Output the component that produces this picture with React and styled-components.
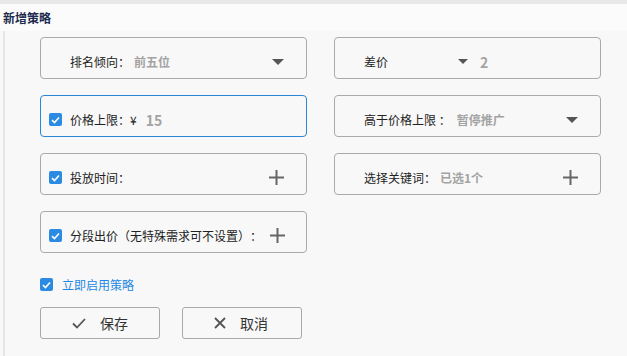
import React from "react";
import styled, { createGlobalStyle } from "styled-components";

const Global = createGlobalStyle`
  html, body { margin: 0; padding: 0; background: #f8f8f8; }
  body {
    font-family: "Noto Sans CJK SC", "Noto Sans", sans-serif;
    font-size: 12px;
    color: #333;
    text-spacing-trim: space-all;
  }
`;

const Page = styled.div`
  width: 627px;
  height: 356px;
  overflow: hidden;
  background: #f8f8f8;
`;

const TopStrip = styled.div`
  height: 4px;
  background: #e8e8e8;
`;

const Header = styled.div`
  height: 27px;
  display: flex;
  align-items: center;
  padding-left: 3px;
  background: #fbfbfb;
  font-size: 12px;
  font-weight: 700;
  color: #1d2b4f;
`;

const Body = styled.div`
  margin-left: 3px;
  border-left: 2px solid #e3e6ea;
  padding: 6px 0 0 35px;
  height: 330px;
  box-sizing: border-box;
`;

const Grid = styled.div`
  display: grid;
  grid-template-columns: 267px 267px;
  column-gap: 27px;
  row-gap: 16px;
  width: 561px;
`;

const Field = styled.div`
  height: 42px;
  box-sizing: border-box;
  border: 1px solid ${(p) => (p.$active ? "#2a86d6" : "#aaaaaa")};
  border-radius: 4px;
  display: flex;
  align-items: center;
  padding: 7px 22px 0 8px;
  gap: 8px;
  white-space: nowrap;
`;

const CheckSlot = styled.span`
  width: 13px;
  height: 13px;
  flex: none;
  border-radius: 2px;
  background: ${(p) => (p.$on ? "#2b8be2" : "transparent")};
  display: inline-flex;
  align-items: center;
  justify-content: center;
`;

const Label = styled.span`
  color: #222;
  font-size: 12px;
  ${(p) => (p.$w ? `width: ${p.$w}px;` : "")}
`;

const Value = styled.span`
  color: #a3a3a3;
  font-size: ${(p) => (p.$big ? "14px" : "12px")};
  font-weight: 700;
  margin-left: ${(p) => p.$ml ?? 0}px;
`;

const Trail = styled.span`
  margin-left: auto;
  display: inline-flex;
  align-items: center;
`;

const Triangle = styled.span`
  width: 0;
  height: 0;
  border-left: ${(p) => p.$s}px solid transparent;
  border-right: ${(p) => p.$s}px solid transparent;
  border-top: ${(p) => p.$h}px solid #555;
  display: inline-block;
`;

const Inline = styled.span`
  display: inline-flex;
  align-items: center;
  gap: 12px;
`;

const EnableRow = styled.div`
  display: flex;
  align-items: center;
  gap: 9px;
  margin-top: 25px;
  height: 13px;
  color: #1e88e5;
  font-size: 12px;
`;

const Buttons = styled.div`
  display: flex;
  gap: 22px;
  margin-top: 16px;
`;

const Button = styled.button`
  width: 120px;
  height: 32px;
  box-sizing: border-box;
  border: 1px solid #a9a9a9;
  border-radius: 3px;
  background: #f8f8f8;
  font-family: "Noto Sans CJK SC", sans-serif;
  font-size: 14px;
  color: #333;
  display: flex;
  align-items: center;
  gap: 14px;
  padding: 0 0 0 ${(p) => p.$pl}px;
  justify-content: flex-start;
`;

const Check = () => (
  <svg width="9" height="8" viewBox="0 0 9 8">
    <path d="M1 4.2 L3.5 6.5 L8 1.5" stroke="#fff" strokeWidth="1.6" fill="none" />
  </svg>
);

const Plus = () => (
  <svg width="15" height="15" viewBox="0 0 15 15">
    <path d="M7.5 0 V15 M0 7.5 H15" stroke="#666" strokeWidth="2" />
  </svg>
);

const Box = ({ check, active, children, trail }) => (
  <Field $active={active}>
    <CheckSlot $on={check}>{check && <Check />}</CheckSlot>
    {children}
    {trail && <Trail>{trail}</Trail>}
  </Field>
);

export default function App() {
  return (
    <Page lang="zh-CN">
      <Global />
      <TopStrip />
      <Header>新增策略</Header>
      <Body>
        <Grid>
          <Box trail={<Triangle $s={6} $h={6} />}>
            <Label>
              排名倾向：<Value $ml={4}>前五位</Value>
            </Label>
          </Box>
          <Box>
            <Label $w={86}>差价</Label>
            <Inline>
              <Triangle $s={5} $h={5} />
              <Value $big>2</Value>
            </Inline>
          </Box>
          <Box check active>
            <Label>价格上限：¥</Label>
            <Value $big $ml={1}>15</Value>
          </Box>
          <Box trail={<Triangle $s={6} $h={6} />}>
            <Label>
              高于价格上限 ：<Value $ml={6}>暂停推广</Value>
            </Label>
          </Box>
          <Box check trail={<Plus />}>
            <Label>投放时间：</Label>
          </Box>
          <Box trail={<Plus />}>
            <Label>
              选择关键词：<Value $ml={4}>已选1个</Value>
            </Label>
          </Box>
          <Box check trail={<Plus />}>
            <Label>分段出价（无特殊需求可不设置）：</Label>
          </Box>
        </Grid>
        <EnableRow>
          <CheckSlot $on>
            <Check />
          </CheckSlot>
          立即启用策略
        </EnableRow>
        <Buttons>
          <Button $pl={31}>
            <svg width="14" height="11" viewBox="0 0 14 11">
              <path d="M1 5.5 L5 9.5 L13 1" stroke="#555" strokeWidth="1.8" fill="none" />
            </svg>
            保存
          </Button>
          <Button $pl={31}>
            <svg width="12" height="12" viewBox="0 0 12 12">
              <path d="M1 1 L11 11 M11 1 L1 11" stroke="#555" strokeWidth="1.8" fill="none" />
            </svg>
            取消
          </Button>
        </Buttons>
      </Body>
    </Page>
  );
}
